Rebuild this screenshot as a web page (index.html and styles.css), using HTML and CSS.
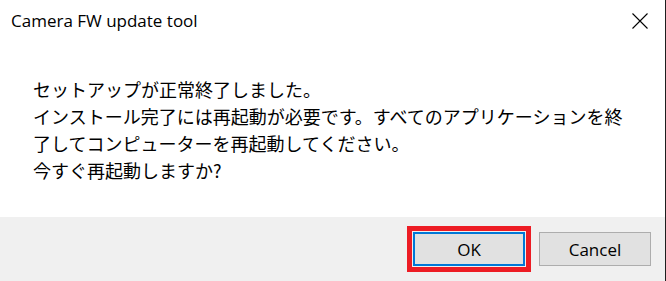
FILE: index.html
```html
<!DOCTYPE html>
<html lang="ja">
<head>
<meta charset="utf-8">
<title>Camera FW update tool</title>
<link rel="stylesheet" href="styles.css">
</head>
<body>
<div class="window">
  <div class="titlebar">
    <div class="title">Camera FW update tool</div>
    <svg class="close" width="16" height="16" viewBox="0 0 16 16" aria-label="閉じる">
      <path d="M0.5 0.5 L15.5 15.5 M15.5 0.5 L0.5 15.5" stroke="#000" stroke-width="1.1" fill="none"/>
    </svg>
  </div>
  <div class="content">
    <p class="message">セットアップが正常終了しました。<br>インストール完了には再起動が必要です。すべてのアプリケーションを終<br>了してコンピューターを再起動してください。<br>今すぐ再起動しますか?</p>
  </div>
  <div class="footer">
    <div class="btn-wrap">
      <button class="btn btn-default">OK</button>
      <span class="highlight"></span>
    </div>
    <button class="btn">Cancel</button>
  </div>
</div>
</body>
</html>
```
FILE: styles.css
```css
html, body {
  margin: 0;
  padding: 0;
  background: #fff;
}
.window {
  width: 666px;
  height: 281px;
  box-sizing: border-box;
  border-right: 1px solid #1e1e1e;
  display: flex;
  flex-direction: column;
  background: #fff;
  font-family: "Open Sans", "Noto Sans", sans-serif;
  color: #000;
}
.titlebar {
  display: flex;
  justify-content: space-between;
  align-items: flex-start;
  height: 40px;
  padding: 9px 17px 0 11px;
  box-sizing: border-box;
}
.title {
  font-size: 17px;
  line-height: 23px;
}
.close {
  display: block;
  margin-top: 4px;
}
.content {
  flex: 1;
  padding: 36px 0 0 33px;
}
.message {
  margin: 0;
  font-family: "Noto Sans CJK JP", "Noto Sans", sans-serif;
  font-size: 18px;
  line-height: 27px;
  white-space: nowrap;
}
.footer {
  height: 64px;
  background: #f0f0f0;
  display: flex;
  justify-content: flex-end;
  align-items: flex-start;
  gap: 14px;
  padding: 15px 14px 0 0;
  box-sizing: border-box;
}
.btn-wrap {
  position: relative;
}
.btn {
  display: block;
  width: 112px;
  height: 34px;
  margin: 0;
  padding: 0;
  box-sizing: border-box;
  background: #e1e1e1;
  border: 1px solid #adadad;
  font-family: "Open Sans", "Noto Sans", sans-serif;
  font-size: 17px;
  color: #000;
}
.btn-default {
  border: 2px solid #0078d7;
}
.highlight {
  position: absolute;
  left: -6px;
  top: -6px;
  right: -6px;
  bottom: -6px;
  border: 5px solid #ed1c24;
  pointer-events: none;
}
```
